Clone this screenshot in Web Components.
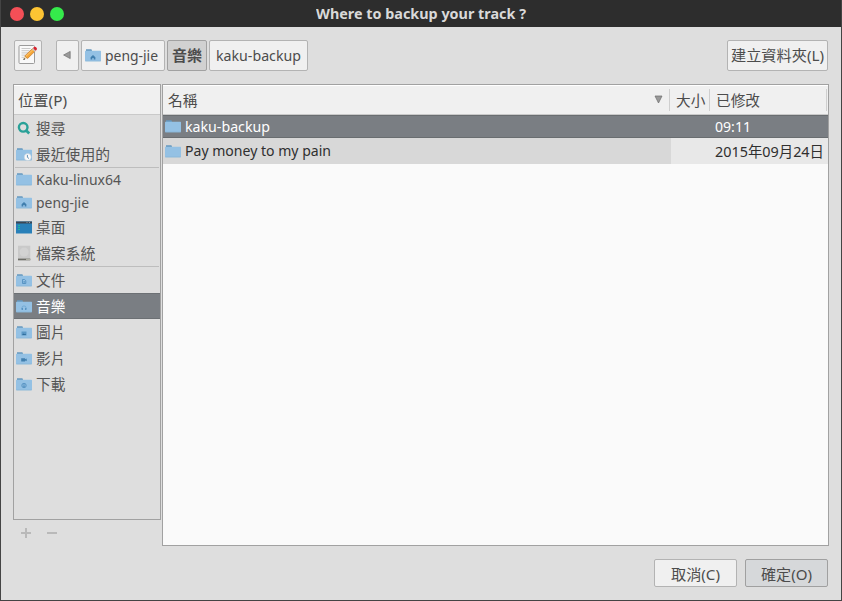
<!DOCTYPE html>
<html lang="zh-Hant">
<head>
<meta charset="utf-8">
<title>Where to backup your track ?</title>
<style>
html,body{margin:0;width:842px;height:601px;overflow:hidden;background:#dedede}
body{font:14.67px/20px "Noto Sans","Noto Sans CJK TC",sans-serif;color:#4c4c4c}
</style>
</head>
<body>
<backup-dialog></backup-dialog>
<script>
function define(name, markup, setup){
  const t=document.createElement('template');
  t.innerHTML=markup;
  customElements.define(name,class extends HTMLElement{
    connectedCallback(){
      if(this.shadowRoot)return;
      const r=this.attachShadow({mode:'open'});
      r.append(t.content.cloneNode(true));
      if(setup)setup(this,r);
    }
  });
}

/* A label whose text is condensed or expanded to a set width. */
define('fit-text',`<style>
:host{display:block;flex:none;white-space:nowrap;height:20px;line-height:20px}
span{display:inline-block;transform-origin:0 50%;white-space:nowrap}
</style><span><slot></slot></span>`,(el,r)=>{
  const w=+el.getAttribute('w'), s=r.querySelector('span');
  el.style.width=w+'px';
  s.style.transform='scaleX('+w/s.getBoundingClientRect().width+')';
});

const marks={
  home:'<path d="M8 6 5.6 8.2V10.4h1.7V9h1.4v1.4h1.7V8.2Z" fill="#417fae"/>',
  recent:'<circle cx="11.7" cy="9.1" r="3.5" fill="#fafafa" stroke="#b8c9d6" stroke-width=".5"/><path d="M11.4 6.9V9.3L13 10.5" fill="none" stroke="#5286b0" stroke-width=".9"/>',
  doc:'<path d="M6.5 5.5H8.6L9.8 6.7V9.5H6.5Z" fill="none" stroke="#5290c0" stroke-width=".9"/><path d="M7.4 7.5H9M7.4 8.7H9" stroke="#5290c0" stroke-width=".7"/>',
  music:'<path d="M5.9 8.9V8a2.1 2.1 0 0 1 4.2 0V8.9" fill="none" stroke="#6ba4cf" stroke-width=".8"/><path d="M5.6 8h1.3v1.9H5.6ZM9.1 8h1.3v1.9H9.1Z" fill="#5290c0"/>',
  image:'<path d="M5.5 5.5h5v4h-5Z" fill="#5b98c6"/><path d="M6 9 7.5 7.4l1 .9.8-.6.8 1.3Z" fill="#2f6d9d"/>',
  video:'<path d="M5.2 6.2h3.9v1l1.6-.8v2.8l-1.6-.8v1.1H5.2Z" fill="#417fae"/>',
  down:'<circle cx="8" cy="7.5" r="2.2" fill="none" stroke="#5290c0" stroke-width=".9"/><path d="M8 6v2.7M7 7.7l1 1 1-1" fill="none" stroke="#4585b6" stroke-width=".8"/>'
};
const folder=k=>'<svg width="16" height="13" viewBox="0 0 16 13"><path d="M1 .3h5.3L7 1.3V3H1Z" fill="#6699bf"/><path d="M.6 1.8h14.8q.6 0 .6.6v9.2q0 .6-.6.6H.6q-.6 0-.6-.6v-9.2q0-.6.6-.6Z" fill="#94c1e4"/><path d="M.3 12h15.4" stroke="#84b1d5" stroke-width=".6"/>'+(marks[k]||'')+'</svg>';
const icons={
  search:'<svg width="16" height="16" viewBox="0 0 16 16"><circle cx="7.2" cy="7.3" r="4.3" fill="none" stroke="#2aa198" stroke-width="2.4"/><path d="m10 10.2 3.2 3.3" stroke="#2aa198" stroke-width="2.7"/></svg>',
  desktop:'<svg width="16" height="13" viewBox="0 0 16 13"><path d="M0 .5h16v12H0Z" fill="#2980b9"/><path d="M0 .5h16v2H0Z" fill="#3b4654"/><path d="M10.5 1.5h1M13 1.5h1" stroke="#8c959d"/><path d="M2 4h2v1H2ZM2 6h2v1H2ZM2 8h2v1H2Z" fill="#1abc9c"/></svg>',
  disk:'<svg width="16" height="16" viewBox="0 0 16 16"><path d="M2 .7h12.3v14.6H2Z" fill="#c9c9c9"/><circle cx="8.1" cy="7" r="4.5" fill="#d2d2d2"/><path d="M2 13.6h12.3v1.7H2Z" fill="#6c6c66"/><path d="M10 14.4h4" stroke="#b8b8ac"/></svg>',
  edit:'<svg width="20" height="20" viewBox="0 0 20 20"><path d="M2 .5h13.5q1 0 1 1v16q0 1-1 1H2q-1 0-1-1v-16q0-1 1-1Z" fill="#f9f9f9" stroke="#9b9b9b"/><path d="M3.5 3.5h9M3.5 5.7h8M3.5 7.9h7M3.5 10.1h4M3.5 12.3h3" stroke="#c8c8c8"/><path d="m5.3 14.8 1.3-4L9.5 13.3Z" fill="#e9d4ad"/><path d="m5.1 15 1-1.9 1.1 1.1Z" fill="#333"/><path d="M6.8 10.9 14.6 3.5 17.2 6.1l-7.6 7.4Z" fill="#f5a535" stroke="#b96c22" stroke-width=".6"/><path d="m7.9 11.4 7.2-6.9" stroke="#ffd382" stroke-width=".8"/><path d="m14 4.1 2.6 2.6 1-1L15 3.1Z" fill="#c6c6c6"/><path d="m15 3.1 1-1q1.2-.7 2.3.4t.4 2.2l-1 1Z" fill="#d8232f"/></svg>',
  left:'<svg width="8" height="10" viewBox="0 0 8 10"><path d="M7.2 1.4v7.2L.6 5Z" fill="#999" stroke="#707070" stroke-width=".7"/></svg>'
};
define('ui-icon',`<style>:host{display:grid;place-items:center;flex:none;width:16px}svg{display:block}</style><div></div>`,(el,r)=>{
  const n=el.getAttribute('name');
  r.querySelector('div').innerHTML=icons[n]||folder(n);
});

define('tool-button',`<style>
:host{box-sizing:border-box;display:flex;align-items:center;justify-content:center;gap:4px;height:31px;border:1px solid #b3b3b3;border-radius:2px;background:#f0f0f0;flex:none;padding:0 1px 1px 0}
:host([active]){background:#d1d1d1;border-color:#a1a1a1;font-weight:700}
:host([default]){background:#d6d8da;border-color:#a0a0a0}
:host([action]){height:28px;width:83px;padding:1px 1px 0 0}
</style><slot></slot>`);

define('title-bar',`<style>
:host{display:grid;grid-template-columns:1fr auto 1fr;align-items:center;height:27px;background:#2d2d2d;color:#d9d9d9;font-weight:700;font-size:14px}
.d{display:flex;gap:6px;padding:1px 0 0 10px}
i{width:14px;height:14px;border-radius:50%;background:#f44f57}
i:nth-child(2){background:#fdc433}i:nth-child(3){background:#35ea4b}
</style><div class="d"><i></i><i></i><i></i></div><slot></slot>`);

define('place-row',`<style>
:host{box-sizing:border-box;display:flex;align-items:center;gap:4px;height:26px;padding-left:2px;color:#555}
:host([latin]){height:23px}
:host([latin]) ::slotted(*){margin-top:-1px}
:host([selected]){background:#7a7e83;color:#fff;border-top:1px solid #6c7074;border-bottom:1px solid #6c7074}
</style><ui-icon></ui-icon><slot></slot>`,(el,r)=>{
  const i=r.querySelector('ui-icon'); i.shadowRoot.querySelector('div').innerHTML=icons[el.getAttribute('icon')]||folder(el.getAttribute('icon'));
});

define('places-panel',`<style>
:host{display:block;width:148px}
.box{box-sizing:border-box;border:1px solid #a1a1a1;height:436px}
.h{box-sizing:border-box;height:30px;background:#f0f0f0;border-top:1px solid #fff;border-bottom:1px solid #c9c9c9;padding:4px 0 0 4px}
hr{border:0;height:1px;margin:0 1px;background:#bdbdbd}
.f{display:flex;gap:16px;padding:8px 0 0 8px}
svg{display:block}
</style><div class="box"><div class="h"><fit-text w="49">位置(P)</fit-text></div>
<place-row icon="search"><fit-text w="29.3">搜尋</fit-text></place-row>
<place-row icon="recent"><fit-text w="74">最近使用的</fit-text></place-row>
<hr>
<place-row latin icon="plain"><fit-text w="85">Kaku-linux64</fit-text></place-row>
<place-row latin icon="home"><fit-text w="53">peng-jie</fit-text></place-row>
<place-row icon="desktop"><fit-text w="29.3">桌面</fit-text></place-row>
<place-row icon="disk"><fit-text w="59.5">檔案系統</fit-text></place-row>
<hr>
<place-row icon="doc"><fit-text w="29.3">文件</fit-text></place-row>
<place-row icon="music" selected><fit-text w="29.3">音樂</fit-text></place-row>
<place-row icon="image"><fit-text w="29.3">圖片</fit-text></place-row>
<place-row icon="video"><fit-text w="29.3">影片</fit-text></place-row>
<place-row icon="down"><fit-text w="29.3">下載</fit-text></place-row>
</div>
<div class="f"><svg width="10" height="10"><path d="M4 0h2v4h4v2H6v4H4V6H0V4h4Z" fill="#b9b9b9"/></svg><svg width="10" height="10"><path d="M0 4h10v2H0Z" fill="#b9b9b9"/></svg></div>`);

define('file-list',`<style>
:host{box-sizing:border-box;display:block;width:667px;height:462px;border:1px solid #a1a1a1;background:#fafafa}
.h,.r{box-sizing:border-box;display:grid;grid-template-columns:508px 40px 1fr}
.h{height:30px;background:#f0f0f0;border-top:1px solid #fff;border-bottom:1px solid #c9c9c9}
.h>div{display:flex;align-items:center;justify-content:space-between;padding:0 8px 1px 5px;position:relative}
.h>div::after{content:"";position:absolute;right:1px;top:3px;bottom:3px;width:1px;background:#cfcfcf}
.r>div{display:flex;align-items:center;gap:4px;padding-left:2px}
.r>div:last-child{padding-left:4px}
.s{height:23px;background:#7a7e83;color:#fff;border-top:1px solid #696d70;border-bottom:1px solid #696d70}
.n{height:26px;background:#e8e8e8;color:#2f2f2f}.n>div:first-child{background:#d8d8d8}
.s fit-text,.n>div:first-child fit-text{margin-top:-1px}
</style>
<div class="h"><div><fit-text w="29.3">名稱</fit-text><svg width="9" height="9"><path d="M1 1h7L4.5 8Z" fill="#999" stroke="#6c6c6c" stroke-width=".7"/></svg></div><div><fit-text w="29.3">大小</fit-text></div><div><fit-text w="44">已修改</fit-text></div></div>
<div class="r s"><div><ui-icon name="plain"></ui-icon><fit-text w="85">kaku-backup</fit-text></div><div></div><div><fit-text w="36">09:11</fit-text></div></div>
<div class="r n"><div><ui-icon name="plain"></ui-icon><fit-text w="146" style="margin-top:-2px">Pay money to my pain</fit-text></div><div></div><div><fit-text w="109">2015年09月24日</fit-text></div></div>`);

define('backup-dialog',`<style>
:host{display:block;box-sizing:border-box;width:842px;height:601px;background:#dedede;position:relative}
:host::after{content:"";position:absolute;inset:0;border:1px solid #444;border-top:0}
.bar{display:flex;gap:2px;padding:13px 14px 0}
.main{display:flex;gap:1px;padding:13px 13px 0}
.foot{display:flex;justify-content:flex-end;gap:8px;padding:13px 14px 0}
</style>
<title-bar><fit-text w="210">Where to backup your track ?</fit-text></title-bar>
<div class="bar">
<tool-button style="width:28px;margin-right:12px"><ui-icon name="edit" style="width:20px"></ui-icon></tool-button>
<tool-button style="width:23px"><ui-icon name="left" style="width:8px"></ui-icon></tool-button>
<tool-button style="width:84px;padding-right:4px"><ui-icon name="home"></ui-icon><fit-text w="53">peng-jie</fit-text></tool-button>
<tool-button active style="width:40px"><fit-text w="30">音樂</fit-text></tool-button>
<tool-button style="width:99px"><fit-text w="85">kaku-backup</fit-text></tool-button>
<tool-button style="width:101px;margin-left:auto"><fit-text w="93">建立資料夾(L)</fit-text></tool-button>
</div>
<div class="main"><places-panel></places-panel><file-list></file-list></div>
<div class="foot"><tool-button action><fit-text w="49">取消(C)</fit-text></tool-button><tool-button action default><fit-text w="51">確定(O)</fit-text></tool-button></div>`);
</script>
</body>
</html>
